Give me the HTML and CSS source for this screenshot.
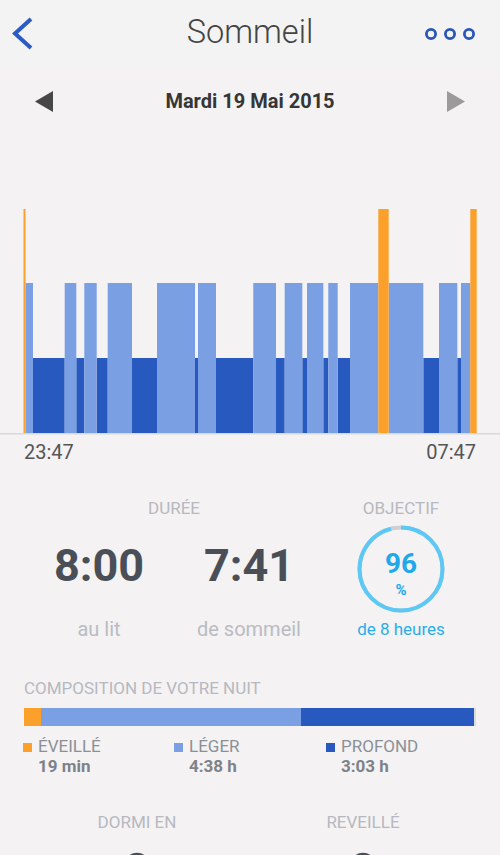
FILE: index.html
```html
<!DOCTYPE html>
<html lang="fr">
<head>
<meta charset="utf-8">
<title>Sommeil</title>
<link rel="stylesheet" href="styles.css">
</head>
<body>
<header class="topbar">
  <svg class="back" width="24" height="36" viewBox="0 0 24 36"><polyline points="20,3 4,17.5 20,32" fill="none" stroke="#2a5cc4" stroke-width="4"/></svg>
  <h1 class="title">Sommeil</h1>
  <svg class="more" width="52" height="14" viewBox="0 0 52 14"><circle cx="7" cy="7" r="4.6" fill="none" stroke="#2a56b8" stroke-width="2.8"/><circle cx="26" cy="7" r="4.6" fill="none" stroke="#2a56b8" stroke-width="2.8"/><circle cx="45" cy="7" r="4.6" fill="none" stroke="#2a56b8" stroke-width="2.8"/></svg>
</header>

<div class="daterow">
  <svg class="arrow" width="18" height="21" viewBox="0 0 18 21"><polygon points="18,0 0,10.5 18,21" fill="#474747"/></svg>
  <div class="date">Mardi 19 Mai 2015</div>
  <svg class="arrow next" width="18" height="21" viewBox="0 0 18 21"><polygon points="0,0 18,10.5 0,21" fill="#9b9b9b"/></svg>
</div>

<svg class="chart" width="500" height="300" viewBox="0 0 500 300">
  <g fill="#2859be">
    <rect x="33" y="223" width="31.7" height="75"/>
    <rect x="76.3" y="223" width="8" height="75"/>
    <rect x="96.7" y="223" width="11" height="75"/>
    <rect x="132" y="223" width="25" height="75"/>
    <rect x="195" y="223" width="3" height="75"/>
    <rect x="216" y="223" width="37.3" height="75"/>
    <rect x="276" y="223" width="8.7" height="75"/>
    <rect x="302.3" y="223" width="4.7" height="75"/>
    <rect x="323.3" y="223" width="5" height="75"/>
    <rect x="337.7" y="223" width="12.3" height="75"/>
    <rect x="423.3" y="223" width="15.7" height="75"/>
    <rect x="457.3" y="223" width="3.7" height="75"/>
  </g>
  <g fill="#7b9fe3">
    <rect x="25.5" y="148" width="7.5" height="150"/>
    <rect x="64.7" y="148" width="11.6" height="150"/>
    <rect x="84.3" y="148" width="12.4" height="150"/>
    <rect x="107.7" y="148" width="24.3" height="150"/>
    <rect x="157" y="148" width="38" height="150"/>
    <rect x="198" y="148" width="18" height="150"/>
    <rect x="253.3" y="148" width="22.7" height="150"/>
    <rect x="284.7" y="148" width="17.6" height="150"/>
    <rect x="307" y="148" width="16.3" height="150"/>
    <rect x="328.3" y="148" width="9.4" height="150"/>
    <rect x="350" y="148" width="28.3" height="150"/>
    <rect x="388.7" y="148" width="34.6" height="150"/>
    <rect x="439" y="148" width="18.3" height="150"/>
    <rect x="461" y="148" width="9.3" height="150"/>
  </g>
  <g fill="#fba02b">
    <rect x="23.5" y="74" width="2" height="224"/>
    <rect x="378.3" y="74" width="10.4" height="224"/>
    <rect x="470.3" y="74" width="6.4" height="224"/>
  </g>
  <rect x="0" y="298" width="500" height="1.5" fill="#d9d9d9"/>
</svg>

<div class="times"><span>23:47</span><span>07:47</span></div>

<section class="stats">
  <div class="label span2">DURÉE</div>
  <div class="label">OBJECTIF</div>
  <div class="big">8:00</div>
  <div class="big">7:41</div>
  <div class="ring">
    <svg width="88" height="88" viewBox="0 0 88 88">
      <circle cx="44" cy="44" r="41.5" fill="none" stroke="#d0d0d0" stroke-width="4"/>
      <circle cx="44" cy="44" r="41.5" fill="none" stroke="#5cc8f5" stroke-width="4" stroke-dasharray="250.3 260.8" transform="rotate(-90 44 44)"/>
    </svg>
    <div class="pct"><span class="pnum">96</span><span class="psign">%</span></div>
  </div>
  <div class="sub">au lit</div>
  <div class="sub">de sommeil</div>
  <div class="sub goal">de 8 heures</div>
</section>

<section class="compo">
  <div class="label">COMPOSITION DE VOTRE NUIT</div>
  <div class="bar">
    <div class="seg awake" style="width:17px"></div>
    <div class="seg light" style="width:260px"></div>
    <div class="seg deep" style="width:173px"></div>
  </div>
  <div class="legend">
    <div class="item"><div class="name"><span class="sq awake"></span>ÉVEILLÉ</div><div class="val">19 min</div></div>
    <div class="item"><div class="name"><span class="sq light"></span>LÉGER</div><div class="val">4:38 h</div></div>
    <div class="item"><div class="name"><span class="sq deep"></span>PROFOND</div><div class="val">3:03 h</div></div>
  </div>
</section>

<section class="wake">
  <div class="col"><div class="label">DORMI EN</div><svg class="clock" width="28" height="28" viewBox="0 0 28 28"><circle cx="14" cy="14" r="12" fill="none" stroke="#4a4f57" stroke-width="2.5"/></svg></div>
  <div class="col"><div class="label">REVEILLÉ</div><svg class="clock" width="28" height="28" viewBox="0 0 28 28"><circle cx="14" cy="14" r="12" fill="none" stroke="#4a4f57" stroke-width="2.5"/></svg></div>
</section>
</body>
</html>
```

FILE: styles.css
```css
html, body {
  margin: 0;
  padding: 0;
}
body {
  width: 500px;
  height: 855px;
  overflow: hidden;
  background: #f4f2f3;
  font-family: Roboto, "Liberation Sans", sans-serif;
}
.topbar {
  height: 67px;
  background: #f3f3f3;
  display: grid;
  grid-template-columns: 1fr auto 1fr;
  align-items: center;
  padding: 0 11px;
}
.back { display: block; }
.more { display: block; justify-self: end; margin-right: 13px; }
.title {
  margin: 0 0 4px;
  font-size: 32.5px;
  font-weight: 300;
  color: #444;
  line-height: 38px;
}
.daterow {
  height: 68px;
  display: grid;
  grid-template-columns: 1fr auto 1fr;
  align-items: center;
  padding: 0 35px;
}
.arrow { display: block; }
.arrow.next { justify-self: end; }
.date {
  font-size: 20px;
  font-weight: 700;
  color: #363636;
  line-height: 24px;
}
.chart { display: block; }
.times {
  display: flex;
  justify-content: space-between;
  padding: 0 24px;
  margin-top: 5px;
  font-size: 20px;
  line-height: 24px;
  color: #555;
}
.label {
  font-size: 17px;
  line-height: 20px;
  color: #b6b9bf;
}
.stats {
  display: grid;
  grid-template-columns: 150px 150px 154px;
  padding-left: 24px;
  margin-top: 34px;
  justify-items: center;
}
.span2 { grid-column: span 2; }
.big {
  font-size: 45px;
  font-weight: 700;
  line-height: 52px;
  color: #4a4f57;
  align-self: start;
  margin-top: 22px;
}
.ring {
  position: relative;
  width: 88px;
  height: 88px;
  margin-top: 7px;
}
.ring svg { display: block; }
.pct {
  position: absolute;
  inset: 0;
  display: flex;
  flex-direction: column;
  align-items: center;
  justify-content: flex-start;
  color: #1fa8ea;
  font-weight: 700;
  padding-top: 25px;
}
.pnum { font-size: 28px; line-height: 28px; }
.psign { font-size: 15px; line-height: 18px; margin-top: 3px; }
.sub {
  font-size: 20px;
  line-height: 24px;
  color: #b9bcc2;
  margin-top: 4px;
}
.sub.goal {
  font-size: 17px;
  color: #2aaee9;
}
.compo {
  padding: 0 24px;
  margin-top: 37px;
}
.bar {
  display: flex;
  height: 18px;
  margin-top: 10px;
  width: 452px;
  background: #dcdcdc;
}
.seg { height: 100%; }
.awake { background: #fba02b; }
.light { background: #7b9fe3; }
.deep { background: #2859be; }
.legend {
  display: grid;
  grid-template-columns: 151px 152px 1fr;
  margin-top: 10px;
  margin-left: -1px;
}
.name {
  font-size: 17px;
  line-height: 20px;
  color: #8b9097;
  display: flex;
  align-items: center;
}
.sq {
  width: 9px;
  height: 9px;
  margin-right: 6px;
  margin-top: 3px;
}
.val {
  padding-left: 15px;
  font-size: 17px;
  line-height: 20px;
  font-weight: 700;
  color: #7d8289;
}
.wake {
  display: grid;
  grid-template-columns: 1fr 1fr;
  padding: 0 24px;
  margin-top: 36px;
}
.col {
  display: flex;
  flex-direction: column;
  align-items: center;
}
.clock {
  display: block;
  margin-top: 20px;
}
```
